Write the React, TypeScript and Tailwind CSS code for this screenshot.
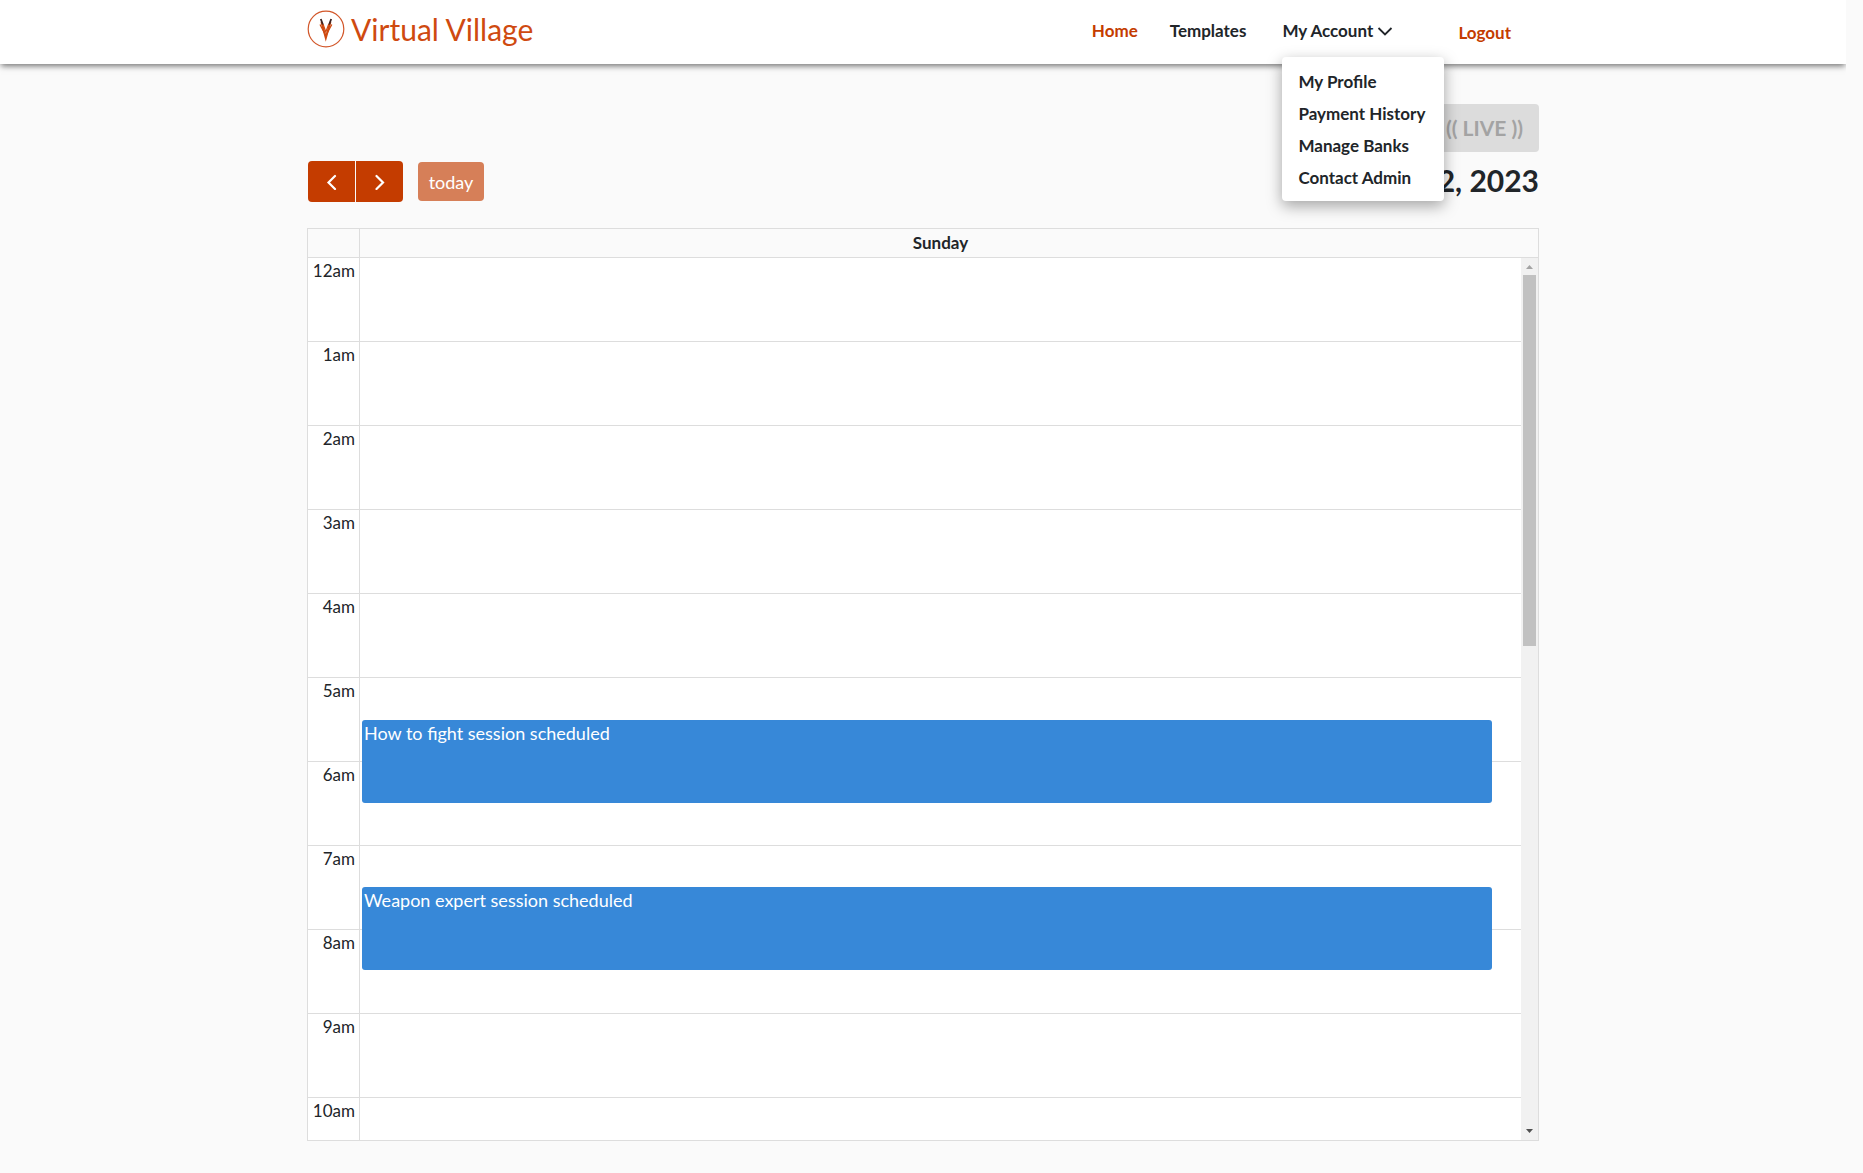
import React from "react";

const hours = ["12am", "1am", "2am", "3am", "4am", "5am", "6am", "7am", "8am", "9am", "10am"];
const accountLinks = ["My Profile", "Payment History", "Manage Banks", "Contact Admin"];

function Logo() {
  return (
    <a href="#" className="flex items-center gap-1.5 text-[#cf4a10]">
      <svg width="38" height="38" viewBox="0 0 38 38" fill="none" aria-hidden="true">
        <circle cx="19" cy="19" r="17.8" stroke="#d2572a" strokeWidth="1.2" />
        <path d="M14.5 12 L18.8 28 L23.4 12" stroke="#cf4a10" strokeWidth="2" />
        <path d="M16 14 L18.8 22 L21.8 14" stroke="#cf4a10" strokeWidth="1.2" />
        <path d="M13 14.5 L18.8 25.5 L24.8 14.5" stroke="#cf4a10" strokeWidth="1.3" />
        <path d="M13.8 9 L15.8 14.5 M24.2 9 L22.2 14.5" stroke="#3c2422" strokeWidth="1.8" />
      </svg>
      <span className="text-3xl leading-9">Virtual Village</span>
    </a>
  );
}

function Header() {
  return (
    <header className="relative z-10 h-16 bg-white shadow-[0_3px_6px_-1px_rgba(0,0,0,0.55)]">
      <div className="mx-auto flex h-full max-w-[1232px] items-start justify-between pt-2.5">
        <Logo />
        <nav className="flex items-start pr-7 pt-[9px] text-[17px] font-bold leading-6">
          <a href="#" className="mr-8 text-[#c43c00]">Home</a>
          <a href="#" className="mr-9">Templates</a>
          <div className="relative w-44">
            <button type="button" className="flex items-center gap-1 font-bold" aria-expanded="true">
              My Account
              <svg width="16" height="16" viewBox="0 0 16 16" fill="none" stroke="currentColor" strokeWidth="1.8" aria-hidden="true">
                <path d="M1.5 5 L8 11.5 L14.5 5" />
              </svg>
            </button>
            <div className="absolute left-0 top-[38px] w-[162px] rounded bg-white pb-[7px] pt-[9px] shadow-[0_5px_15px_rgba(0,0,0,0.35)]">
              {accountLinks.map((label) => (
                <a key={label} href="#" className="block whitespace-nowrap px-4 py-1">{label}</a>
              ))}
            </div>
          </div>
          <a href="#" className="pt-0.5 text-[#c43c00]">Logout</a>
        </nav>
      </div>
    </header>
  );
}

function Toolbar() {
  return (
    <div className="flex h-[76px] items-start justify-between pt-[9px]">
      <div className="flex items-center gap-[15px] pl-px">
        <div className="flex gap-px">
          <button type="button" aria-label="Previous day" className="flex h-[41px] w-[47px] items-center justify-center rounded-l bg-[#c43c00] text-white">
            <svg width="16" height="16" viewBox="0 0 16 16" fill="none" stroke="currentColor" strokeWidth="2.2" strokeLinecap="round" aria-hidden="true">
              <path d="M11 2 L4.5 8.5 L11 15" />
            </svg>
          </button>
          <button type="button" aria-label="Next day" className="flex h-[41px] w-[47px] items-center justify-center rounded-r bg-[#c43c00] text-white">
            <svg width="16" height="16" viewBox="0 0 16 16" fill="none" stroke="currentColor" strokeWidth="2.2" strokeLinecap="round" aria-hidden="true">
              <path d="M4.5 2 L11 8.5 L4.5 15" />
            </svg>
          </button>
        </div>
        <button type="button" className="h-[39px] w-[66px] rounded bg-[#d67f58] text-lg leading-6 text-white">today</button>
      </div>
      <h2 className="text-3xl font-bold leading-[38px]">2, 2023</h2>
    </div>
  );
}

function Event({ title, place }: { title: string; place: string }) {
  return (
    <a href="#" className={`absolute left-0.5 right-[2.5%] h-[83px] rounded-[3px] bg-[#3788d8] px-0.5 pt-px text-lg leading-6 text-white ${place}`}>
      {title}
    </a>
  );
}

function Calendar() {
  return (
    <section className="border border-[#dddddd]">
      <div className="flex h-[29px] border-b border-[#dddddd]">
        <div className="w-[52px] border-r border-[#dddddd]" />
        <div className="flex-1 pr-[17px] text-center text-[17px] font-bold leading-7">Sunday</div>
      </div>
      <div className="flex h-[882px] overflow-hidden bg-white">
        <div className="relative flex-1">
          <table className="w-full table-fixed border-separate border-spacing-0">
            <tbody>
              {hours.map((hour) => (
                <tr key={hour} className="h-[84px]">
                  <th scope="row" className="w-[52px] border-b border-r border-[#dddddd] pr-1 text-right align-top text-[17px] font-normal leading-[26px]">{hour}</th>
                  <td className="border-b border-[#dddddd]" />
                </tr>
              ))}
            </tbody>
          </table>
          <div className="absolute inset-y-0 left-[52px] right-0">
            <Event title="How to fight session scheduled" place="top-[462px]" />
            <Event title="Weapon expert session scheduled" place="top-[629px]" />
          </div>
        </div>
        <div className="flex w-[17px] flex-col items-center justify-between bg-[#f1f1f1]" aria-hidden="true">
          <div className="flex flex-col items-center">
            <svg width="17" height="17" viewBox="0 0 17 17" fill="#a3a3a3"><path d="M5 11 H12 L8.5 7 Z" /></svg>
            <div className="h-[371px] w-[13px] bg-[#c1c1c1]" />
          </div>
          <svg width="17" height="17" viewBox="0 0 17 17" fill="#505050"><path d="M5 6 H12 L8.5 10 Z" /></svg>
        </div>
      </div>
    </section>
  );
}

export default function App() {
  return (
    <div className="min-h-screen bg-[#fafafa] pr-[17px] font-['Lato',sans-serif] text-[#212529]">
      <div className="overflow-x-clip">
        <Header />
        <main className="mx-auto max-w-[1232px] pb-8 pt-10">
          <div className="flex justify-end">
            <button type="button" disabled className="h-12 rounded bg-[#dcdcdc] px-4 text-[21px] font-bold text-[#a3a3a3]">(( LIVE ))</button>
          </div>
          <Toolbar />
          <Calendar />
        </main>
      </div>
    </div>
  );
}
